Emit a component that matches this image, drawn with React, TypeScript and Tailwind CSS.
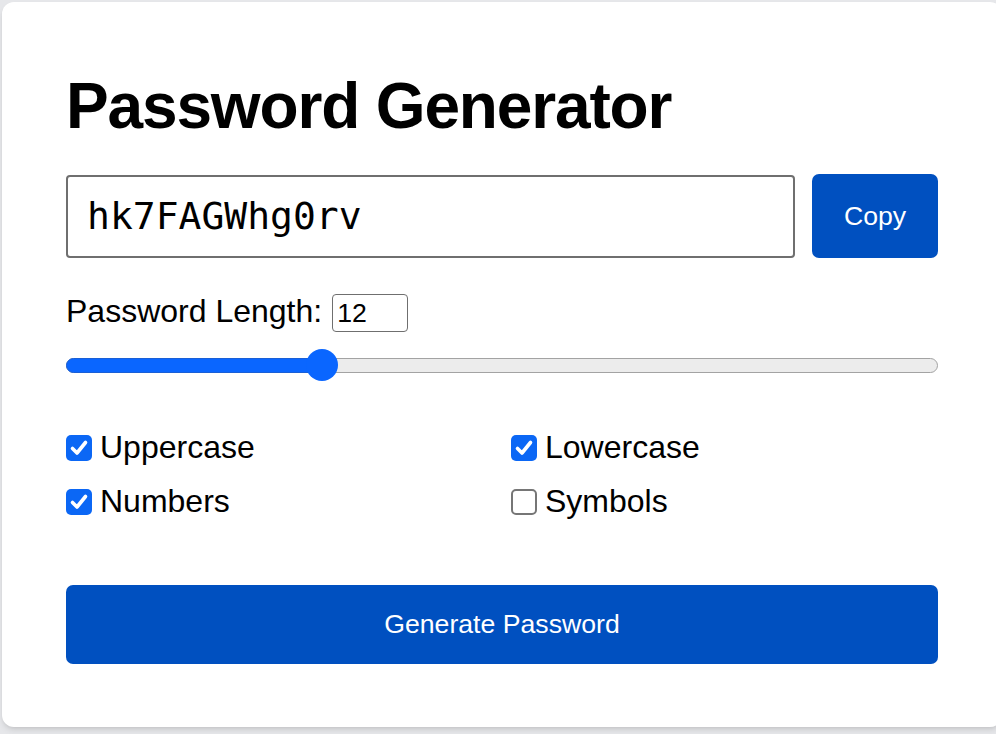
const PASSWORD = "hk7FAGWhg0rv";
const LENGTH = 12;
const MIN = 4;
const MAX = 32;

const OPTIONS = [
  { label: "Uppercase", checked: true },
  { label: "Lowercase", checked: true },
  { label: "Numbers", checked: true },
  { label: "Symbols", checked: false },
];

function Checkbox({ checked }: { checked: boolean }) {
  if (!checked) {
    return <span className="h-[26px] w-[26px] shrink-0 rounded-[5px] border-2 border-[#767676] bg-white" />;
  }
  return (
    <span className="flex h-[26px] w-[26px] shrink-0 items-center justify-center rounded-[5px] bg-[#0b67f5]">
      <svg width="26" height="26" viewBox="0 0 26 26" fill="none">
        <path d="M6.5 13.5l4.5 4.5L19.5 7.5" stroke="white" strokeWidth="3.6" strokeLinecap="round" strokeLinejoin="round" />
      </svg>
    </span>
  );
}

export default function App() {
  // thumb travels within track width minus its own diameter
  const frac = (LENGTH - MIN) / (MAX - MIN);
  const trackW = 872;
  const thumb = 32;
  const thumbLeft = frac * (trackW - thumb);

  return (
    <div className="min-h-screen overflow-hidden bg-[#e6e7ea] p-[2px] font-['Liberation_Sans',Arial,sans-serif] text-black">
      <div className="w-[1000px] rounded-xl bg-white px-16 pb-[63px] pt-[68px] shadow-md">
        <h1 className="text-[64px] font-bold leading-[72px] tracking-[-0.018em]">Password Generator</h1>

        <div className="mt-8 flex items-center gap-[17px]">
          <input
            readOnly
            value={PASSWORD}
            className="h-[83px] min-w-0 flex-1 rounded-[4px] border-2 border-[#6f6f6f] pl-[19px] pr-4 font-['DejaVu_Sans_Mono',monospace] text-[38px] outline-none"
          />
          <button className="h-[84px] w-[126px] rounded-[7px] bg-[#0050c0] text-[26.67px] text-white">Copy</button>
        </div>

        <div className="mt-9 flex h-[38px] items-center gap-[10px]">
          <span className="pb-[4px] text-[32px] leading-[32px]">Password Length:</span>
          <input
            readOnly
            value={LENGTH}
            className="h-[38px] w-[76px] rounded-[4px] border-[1.5px] border-[#6f6f6f] px-[4px] text-[26.67px] outline-none"
          />
        </div>

        <div className="relative mt-[17px] flex h-8 items-center">
          <div className="h-[15px] w-full rounded-full border border-[#a3a3a3] bg-[#ececec]" />
          <div
            className="absolute left-0 h-[15px] rounded-full border border-[#1a5fd6] bg-[#0a66ff]"
            style={{ width: thumbLeft + thumb / 2 }}
          />
          <div className="absolute h-8 w-8 rounded-full bg-[#0a66ff]" style={{ left: thumbLeft }} />
        </div>

        <div className="mt-12 grid grid-cols-2 gap-x-[18px] gap-y-[17px]">
          {OPTIONS.map((o) => (
            <label key={o.label} className="flex items-center gap-[8px] text-[32px] leading-[37px]">
              <Checkbox checked={o.checked} />
              {o.label}
            </label>
          ))}
        </div>

        <button className="mt-[65px] h-[79px] w-full rounded-[7px] bg-[#0050c0] pb-[2px] text-[26.67px] text-white">
          Generate Password
        </button>
      </div>
    </div>
  );
}
